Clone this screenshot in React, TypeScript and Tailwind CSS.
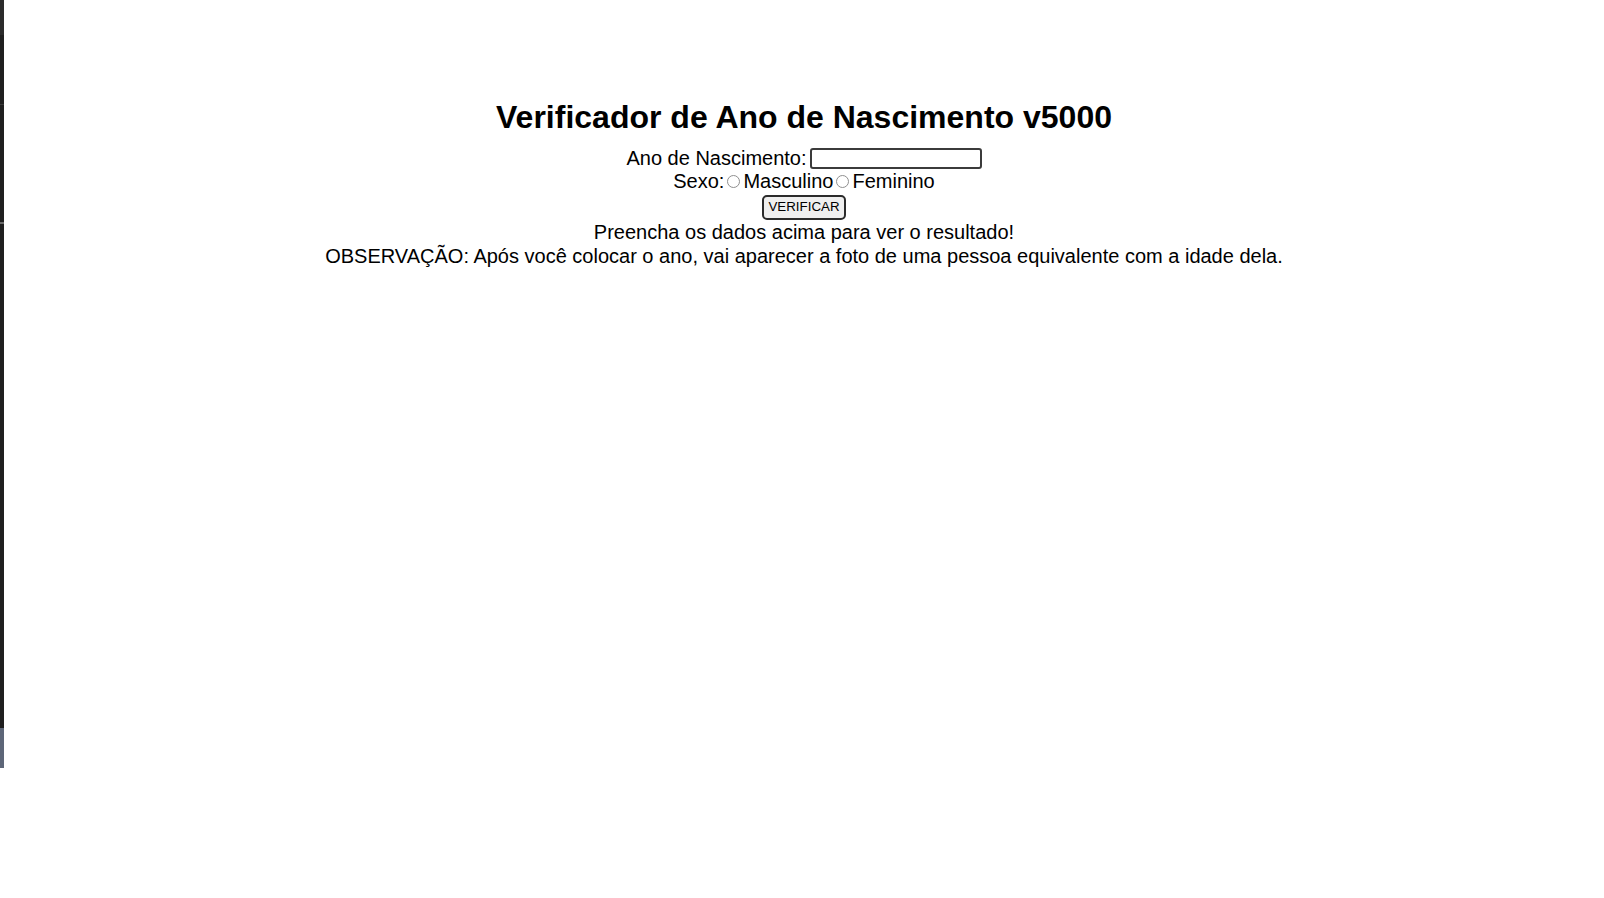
export default function App() {
  return (
    <div className="flex min-h-[898px] w-full bg-white font-['Liberation_Sans',Arial,sans-serif] text-black">
      <div className="flex h-[768px] w-[4px] shrink-0 flex-col">
        <div className="h-[35px] bg-[#2b2b2b]" />
        <div className="h-[69px] bg-[#1f1f1f]" />
        <div className="h-[1px] bg-[#3a3a3a]" />
        <div className="h-[117px] bg-[#1f1f1f]" />
        <div className="h-[2px] bg-[#6a6a6a]" />
        <div className="h-[504px] bg-[#1f1f1f]" />
        <div className="h-[40px] bg-[#5d6678]" />
      </div>

      <div className="flex flex-1 flex-col items-center pt-[99px]">
        <h1 className="text-[32px] font-bold leading-[37px]">Verificador de Ano de Nascimento v5000</h1>

        <div className="mt-[11px] flex flex-col items-center text-[20px] leading-[23px]">
          <div className="flex h-[23px] items-center gap-[3px]">
            <label htmlFor="ano">Ano de Nascimento:</label>
            <input
              id="ano"
              type="text"
              className="h-[21px] w-[172px] rounded-[3px] border-2 border-[#3b3b3b] bg-white px-1 text-[13px] outline-none"
            />
          </div>

          <div className="flex h-[23.5px] items-center">
            <span className="mr-[3px]">Sexo:</span>
            <span className="mr-[3px] inline-block h-[13px] w-[13px] rounded-full border border-[#8f8f8f] bg-white" />
            <span className="mr-[3px]">Masculino</span>
            <span className="mr-[3px] inline-block h-[13px] w-[13px] rounded-full border border-[#8f8f8f] bg-white" />
            <span>Feminino</span>
          </div>

          <div className="flex h-[27px] items-center">
            <button
              type="button"
              className="h-[25px] w-[84px] rounded-[5px] border-2 border-[#2b2b2b] bg-[#efefef] text-[13.33px] leading-none"
            >
              VERIFICAR
            </button>
          </div>

          <p className="h-[24px] leading-[23px]">Preencha os dados acima para ver o resultado!</p>
          <p className="h-[23px] leading-[23px]">
            OBSERVAÇÃO: Após você colocar o ano, vai aparecer a foto de uma pessoa equivalente com a idade dela.
          </p>
        </div>
      </div>
    </div>
  );
}
